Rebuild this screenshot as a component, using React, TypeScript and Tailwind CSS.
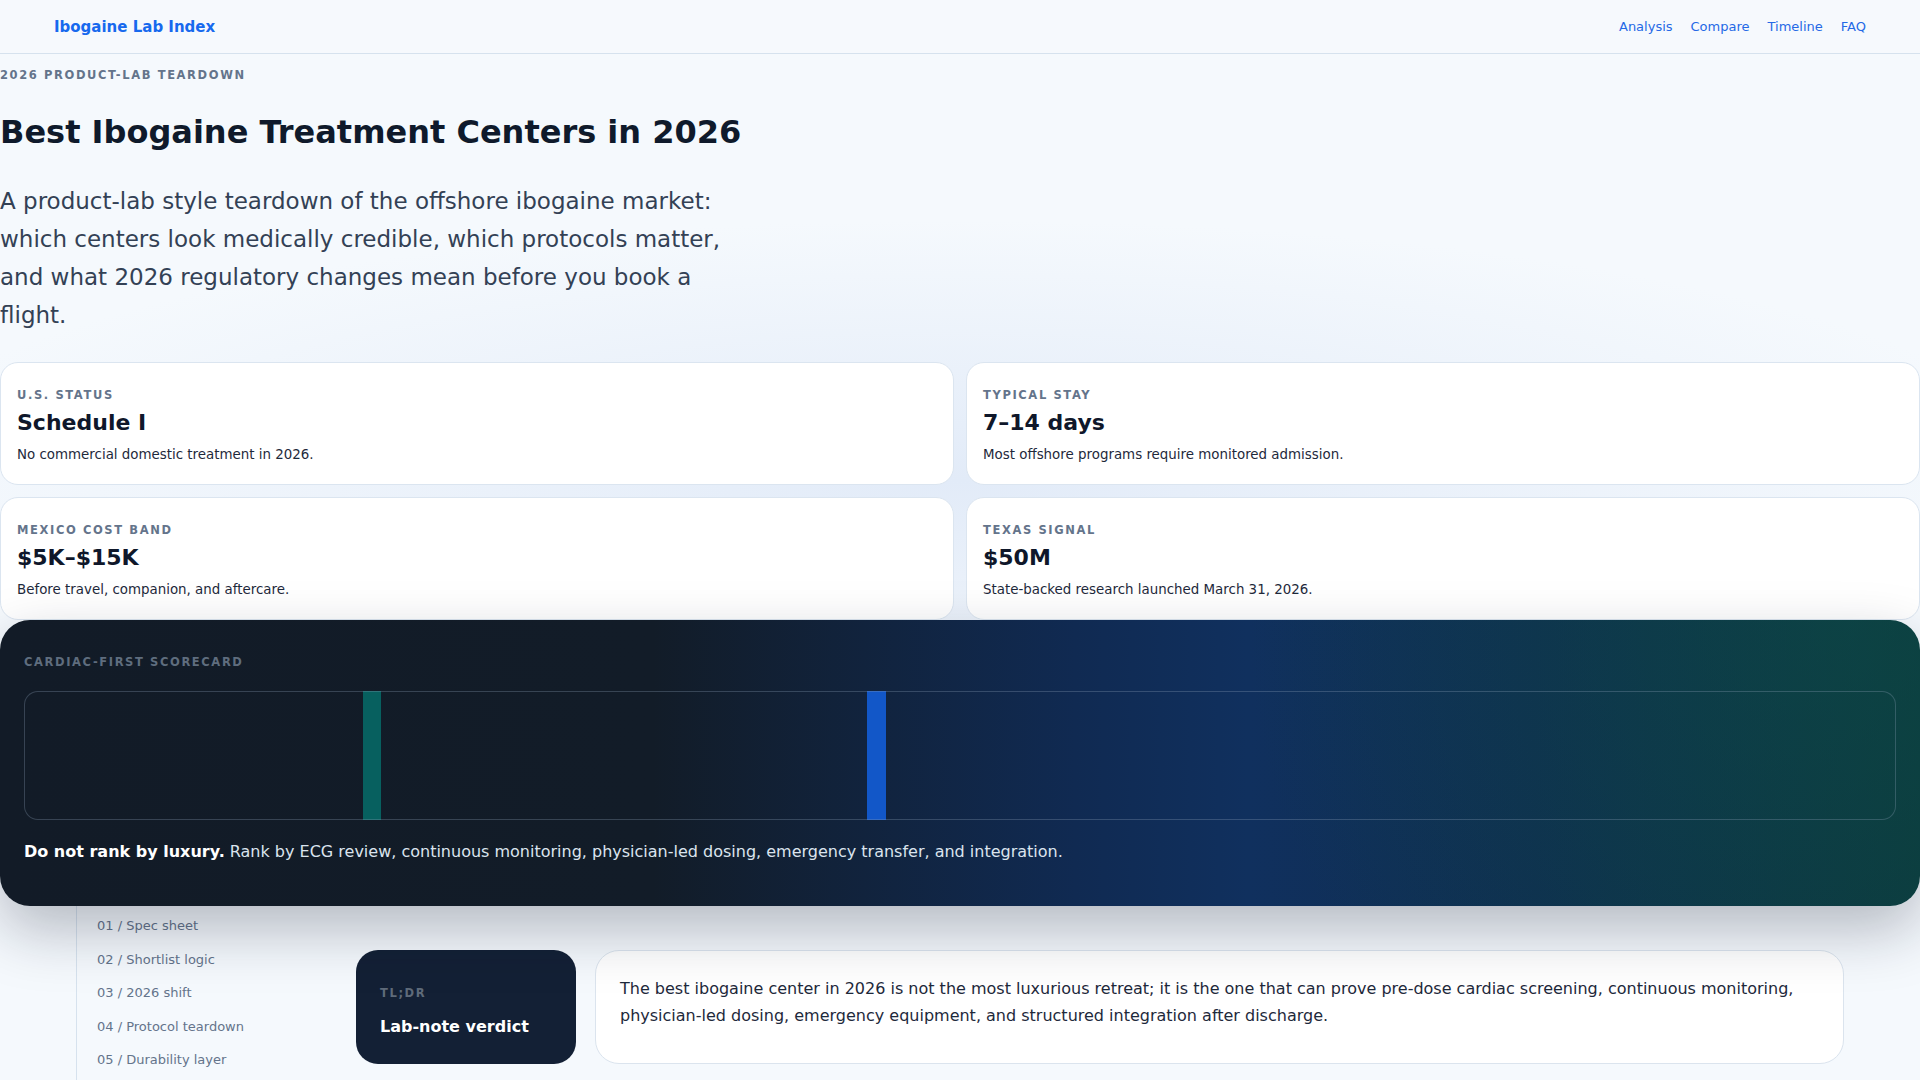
import React from 'react'

interface StatCard {
  label: string
  value: string
  note: string
}

const stats: StatCard[] = [
  { label: 'U.S. Status', value: 'Schedule I', note: 'No commercial domestic treatment in 2026.' },
  { label: 'Typical Stay', value: '7–14 days', note: 'Most offshore programs require monitored admission.' },
  { label: 'Mexico Cost Band', value: '$5K–$15K', note: 'Before travel, companion, and aftercare.' },
  { label: 'Texas Signal', value: '$50M', note: 'State-backed research launched March 31, 2026.' },
]

const navLinks = ['Analysis', 'Compare', 'Timeline', 'FAQ']

const sections = [
  '01 / Spec sheet',
  '02 / Shortlist logic',
  '03 / 2026 shift',
  '04 / Protocol teardown',
  '05 / Durability layer',
]

export default function App() {
  return (
    <div className="min-h-screen overflow-hidden bg-[#f5f9fd] bg-[radial-gradient(ellipse_1100px_260px_at_50%_480px,#e2ebf8_0%,rgba(245,249,253,0)_100%)] font-['DejaVu_Sans',sans-serif] text-slate-900">
      {/* Top bar */}
      <header className="flex h-[54px] items-center justify-between border-b border-[#d6e2ee] bg-[#f6f9fd] px-[54px]">
        <a className="pt-[2px] text-[15px] font-bold text-[#1769ee]">Ibogaine Lab Index</a>
        <nav className="flex gap-[18px] text-[13px] text-[#2569e6]">
          {navLinks.map((l) => (
            <a key={l}>{l}</a>
          ))}
        </nav>
      </header>

      <main>
        {/* Hero */}
        <section className="pt-[13px]">
          <p className="text-[11.5px] font-bold uppercase leading-4 tracking-[0.14em] text-[#64748b]">
            2026 Product-Lab Teardown
          </p>
          <h1 className="mt-[25px] text-[32px] font-bold leading-[48px] text-[#0f1a2b]">
            Best Ibogaine Treatment Centers in 2026
          </h1>
          <p className="mt-[26px] max-w-[745px] text-[23px] leading-[38px] text-[#334155]">
            A product-lab style teardown of the offshore ibogaine market: which centers look medically credible,
            which protocols matter, and what 2026 regulatory changes mean before you book a flight.
          </p>
        </section>

        {/* Spec sheet cards */}
        <section className="mt-[28px] grid grid-cols-2 gap-3">
          {stats.map((s) => (
            <div key={s.label} className="rounded-[18px] border border-[#dbe5f0] bg-white px-4 pb-[19px] pt-6">
              <p className="text-[11.5px] font-bold uppercase leading-4 tracking-[0.14em] text-[#64748b]">{s.label}</p>
              <p className="mt-1.5 text-[22px] font-bold leading-7 text-[#0f172a]">{s.value}</p>
              <p className="mt-2 text-[13.4px] leading-5 text-[#1e293b]">{s.note}</p>
            </div>
          ))}
        </section>

        {/* Scorecard */}
        <section className="relative rounded-[30px] bg-[radial-gradient(circle_at_96%_0%,rgba(12,78,72,0.5)_0%,rgba(12,78,72,0)_32%),linear-gradient(90deg,#121b27_0%,#121c28_34%,#102a52_56%,#10305e_65%,#0f2e50_80%,#0c383d_100%)] px-6 pb-[42px] pt-[34px] shadow-[0_24px_60px_rgba(15,23,42,0.28)]">
          <p className="text-[11.5px] font-bold uppercase leading-4 tracking-[0.14em] text-[#5f6d7e]">
            Cardiac-First Scorecard
          </p>
          <div className="mt-[21px] h-[129px] rounded-[14px] border border-slate-400/30 bg-[linear-gradient(90deg,transparent_338px,#07605f_338px,#07605f_356px,transparent_356px,transparent_842px,#1257c8_842px,#1257c8_861px,transparent_861px)]" />
          <p className="mt-5 text-base leading-6 text-[#dbe4ee]">
            <strong className="font-bold text-white">Do not rank by luxury.</strong> Rank by ECG review, continuous
            monitoring, physician-led dosing, emergency transfer, and integration.
          </p>
        </section>

        {/* Lower layout */}
        <section className="mx-auto flex max-w-[1768px] gap-4">
          <aside className="w-[264px] shrink-0 border-l border-[#d6e2ee] pb-6 pl-5 pt-[10px]">
            <ul className="flex flex-col gap-[13.6px] text-[13px] leading-5 text-[#64748b]">
              {sections.map((s) => (
                <li key={s}>{s}</li>
              ))}
            </ul>
          </aside>

          <div className="flex flex-1 gap-[19px] pt-[44px]">
            <div className="h-[114px] w-[220px] shrink-0 rounded-[22px] bg-[#132035] px-6 pt-[35px]">
              <p className="text-[11.5px] font-bold uppercase leading-4 tracking-[0.14em] text-[#5f6b7a]">TL;DR</p>
              <p className="mt-[14px] text-base font-bold leading-6 text-white">Lab-note verdict</p>
            </div>
            <div className="h-[114px] flex-1 rounded-3xl border border-[#dbe4ee] bg-white px-6 pt-6">
              <p className="text-base leading-[27px] text-[#1e293b]">
                The best ibogaine center in 2026 is not the most luxurious retreat; it is the one that can prove
                pre-dose cardiac screening, continuous monitoring, physician-led dosing, emergency equipment, and
                structured integration after discharge.
              </p>
            </div>
          </div>
        </section>
      </main>
    </div>
  )
}
